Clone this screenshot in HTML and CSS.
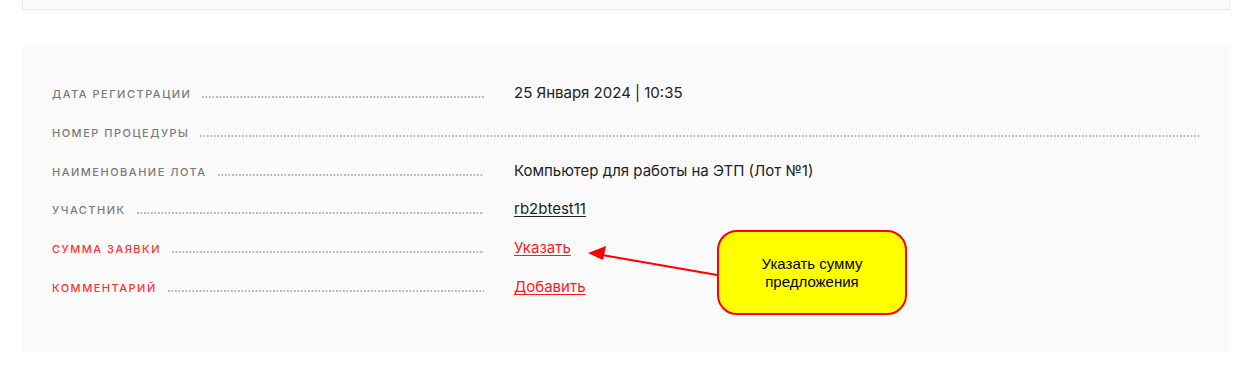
FILE: index.html
```html
<!DOCTYPE html>
<html lang="ru">
<head>
    <meta charset="UTF-8">
    <meta name="viewport" content="width=device-width, initial-scale=1.0">
    <title>Заявка</title>
    <link rel="stylesheet" href="styles.css">
</head>
<body>
    <div class="top-card"></div>

    <div class="details">
        <div class="row">
            <div class="label-col">
                <span class="label">Дата регистрации</span>
                <span class="leader"></span>
            </div>
            <div class="value">25 Января 2024 | 10:35</div>
        </div>
        <div class="row">
            <div class="label-col wide">
                <span class="label">Номер процедуры</span>
                <span class="leader"></span>
            </div>
        </div>
        <div class="row">
            <div class="label-col">
                <span class="label">Наименование лота</span>
                <span class="leader"></span>
            </div>
            <div class="value">Компьютер для работы на ЭТП (Лот №1)</div>
        </div>
        <div class="row">
            <div class="label-col">
                <span class="label">Участник</span>
                <span class="leader"></span>
            </div>
            <div class="value"><a class="link" href="#">rb2btest11</a></div>
        </div>
        <div class="row required">
            <div class="label-col">
                <span class="label">Сумма заявки</span>
                <span class="leader"></span>
            </div>
            <div class="value"><a class="link" href="#">Указать</a></div>
        </div>
        <div class="row required">
            <div class="label-col">
                <span class="label">Комментарий</span>
                <span class="leader"></span>
            </div>
            <div class="value"><a class="link" href="#">Добавить</a></div>
        </div>

        <!-- annotation over the card -->
        <svg class="callout-arrow" width="140" height="40" viewBox="0 0 140 40">
            <line x1="135" y1="30" x2="14" y2="9" stroke="#ff0000" stroke-width="2"/>
            <polygon points="0,7 18,0 15,14" fill="#ff0000"/>
        </svg>
        <div class="callout">Указать сумму<br>предложения</div>
    </div>
</body>
</html>
```

FILE: styles.css
```css
body {
    margin: 0;
    background: #fff;
    font-family: Inter, 'Noto Sans', sans-serif;
    color: #222;
}
.top-card {
    height: 9px;
    margin: 0 14px 0 22px;
    background: #fbfbfb;
    border: 1px solid #ececec;
    border-top: none;
}
.details {
    position: relative;
    margin: 35px 14px 0 22px;
    height: 307px;
    box-sizing: border-box;
    padding: 30px 30px 0 30px;
    background: #fafafa;
}
.row {
    display: flex;
    align-items: baseline;
    height: 38.8px;
}
.label-col {
    display: flex;
    align-items: baseline;
    width: 432px;
    flex: none;
}
.label-col.wide {
    flex: 1;
    width: auto;
}
.label {
    font-size: 11px;
    font-weight: 500;
    letter-spacing: 1.5px;
    text-transform: uppercase;
    color: #7a7a7a;
    line-height: 38px;
    white-space: nowrap;
}
.leader {
    flex: 1;
    height: 2px;
    margin-left: 11px;
    background-image: linear-gradient(to right, #b5b5b5 2px, transparent 2px);
    background-size: 3.5px 2px;
}
.value {
    margin-left: 30px;
    font-size: 15px;
    color: #222;
}
.link {
    color: #222;
    text-decoration: underline;
    text-underline-offset: 2px;
}
.required .label {
    color: #ff3333;
}
.required .link {
    color: #ff1a1a;
}
.callout {
    position: absolute;
    left: 695px;
    top: 185px;
    width: 190px;
    height: 85px;
    box-sizing: border-box;
    display: flex;
    align-items: center;
    justify-content: center;
    text-align: center;
    background: #ffff00;
    border: 2px solid #ff0000;
    border-radius: 20px;
    font-family: 'Liberation Sans', sans-serif;
    font-size: 15px;
    line-height: 18px;
    color: #000;
}
.callout-arrow {
    position: absolute;
    left: 566px;
    top: 201px;
}
```
